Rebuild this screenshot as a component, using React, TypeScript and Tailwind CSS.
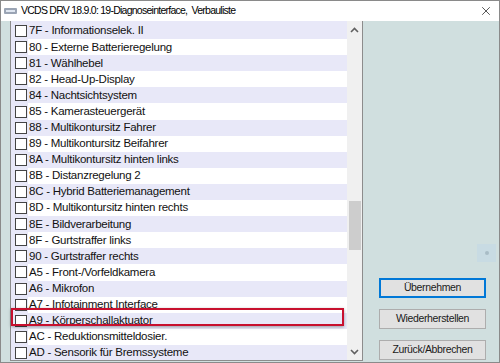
import { X } from "lucide-react"

const items = [
  "7F - Informationselek. II",
  "80 - Externe Batterieregelung",
  "81 - Wählhebel",
  "82 - Head-Up-Display",
  "84 - Nachtsichtsystem",
  "85 - Kamerasteuergerät",
  "88 - Multikontursitz Fahrer",
  "89 - Multikontursitz Beifahrer",
  "8A - Multikontursitz hinten links",
  "8B - Distanzregelung 2",
  "8C - Hybrid Batteriemanagement",
  "8D - Multikontursitz hinten rechts",
  "8E - Bildverarbeitung",
  "8F - Gurtstraffer links",
  "90 - Gurtstraffer rechts",
  "A5 - Front-/Vorfeldkamera",
  "A6 - Mikrofon",
  "A7 - Infotainment Interface",
  "A9 - Körperschallaktuator",
  "AC - Reduktionsmitteldosier.",
  "AD - Sensorik für Bremssysteme",
  "",
]

function Btn({ label, focused }: { label: string; focused?: boolean }) {
  return (
    <div
      className={`w-[107px] h-[20px] flex items-center justify-center bg-[#e1e1e1] text-[10.5px] tracking-[-0.35px] text-[#1a1a1a] ${
        focused ? "border-2 border-[#0078d7]" : "border border-[#adadad]"
      }`}
    >
      {label}
    </div>
  )
}

export default function App() {
  return (
    <div
      className="w-[500px] h-[363px] bg-white border border-[#8a8a8a] flex flex-col overflow-hidden relative"
      style={{ fontFamily: '"Liberation Sans", Arial, sans-serif' }}
    >
      {/* Title bar */}
      <div className="h-[20px] flex items-center shrink-0 bg-white">
        <svg width="16" height="10" viewBox="0 0 16 10" className="ml-[2px] mr-[2px]">
          <rect x="1" y="2" width="13" height="6" rx="1" fill="#9aa4b4" />
          <rect x="3" y="4" width="9" height="2" fill="#dfe6f0" />
        </svg>
        <span className="text-[10.5px] tracking-[-0.75px] text-black">
          VCDS DRV 18.9.0: 19-Diagnoseinterface,&nbsp; Verbauliste
        </span>
        <X className="ml-auto mr-[6px] w-[14px] h-[14px] text-[#222]" strokeWidth={1.3} />
      </div>

      {/* Body */}
      <div className="flex-1 flex bg-[#d0dfdf] min-h-0">
        <div className="w-[9px] shrink-0" />
        {/* List box */}
        <div className="w-[353px] shrink-0 flex border-l border-b border-[#8c8c8c] bg-[#e8e8f8] overflow-hidden mb-[1px]">
          <div className="flex-1 flex flex-col pt-[2px] overflow-hidden">
            {items.map((t, i) => (
              <div key={i} className="h-[16.1px] shrink-0 flex items-center">
                <div className="w-[17px] shrink-0 flex items-center">
                  <div className="ml-[4px] w-[12px] h-[12px] bg-white border border-[#444]" />
                </div>
                <div
                  className={`flex-1 h-full flex items-center pl-[1px] text-[11.5px] tracking-[-0.25px] text-[#111] whitespace-nowrap ${
                    i % 2 === 1 ? "bg-white" : ""
                  }`}
                >
                  {t}
                </div>
              </div>
            ))}
          </div>
          {/* Scrollbar */}
          <div className="w-[16px] shrink-0 bg-[#f0f0f0] border-r border-[#8c8c8c] flex flex-col items-center">
            <svg width="9" height="6" viewBox="0 0 9 6" className="mt-[6px]">
              <path d="M1 5 L4.5 1.5 L8 5" stroke="#606060" strokeWidth="1.6" fill="none" />
            </svg>
            <div className="mt-[168px] w-[12px] h-[49px] bg-[#cdcdcd]" />
            <svg width="9" height="6" viewBox="0 0 9 6" className="mt-auto mb-[5px]">
              <path d="M1 1 L4.5 4.5 L8 1" stroke="#606060" strokeWidth="1.6" fill="none" />
            </svg>
          </div>
        </div>

        {/* Right panel */}
        <div className="flex-1 flex flex-col items-center justify-end gap-[11px] pb-[2px] pl-[3px]">
          <Btn label="Übernehmen" focused />
          <Btn label="Wiederherstellen" />
          <Btn label="Zurück/Abbrechen" />
        </div>
      </div>

      {/* Red highlight around A9 */}
      <div className="absolute left-[10px] top-[307px] w-[333px] h-[18px] border-2 border-[#c8102e] shadow-[0_1px_3px_rgba(0,0,0,0.35)]" />

      {/* Faint tooltip remnant */}
      <div className="absolute left-[476px] top-[243px] w-[19px] h-[18px] bg-[#c8dbe3] flex items-center justify-center">
        <div className="w-[4px] h-[4px] rounded-full bg-[#a8bcc6]" />
      </div>
    </div>
  )
}
